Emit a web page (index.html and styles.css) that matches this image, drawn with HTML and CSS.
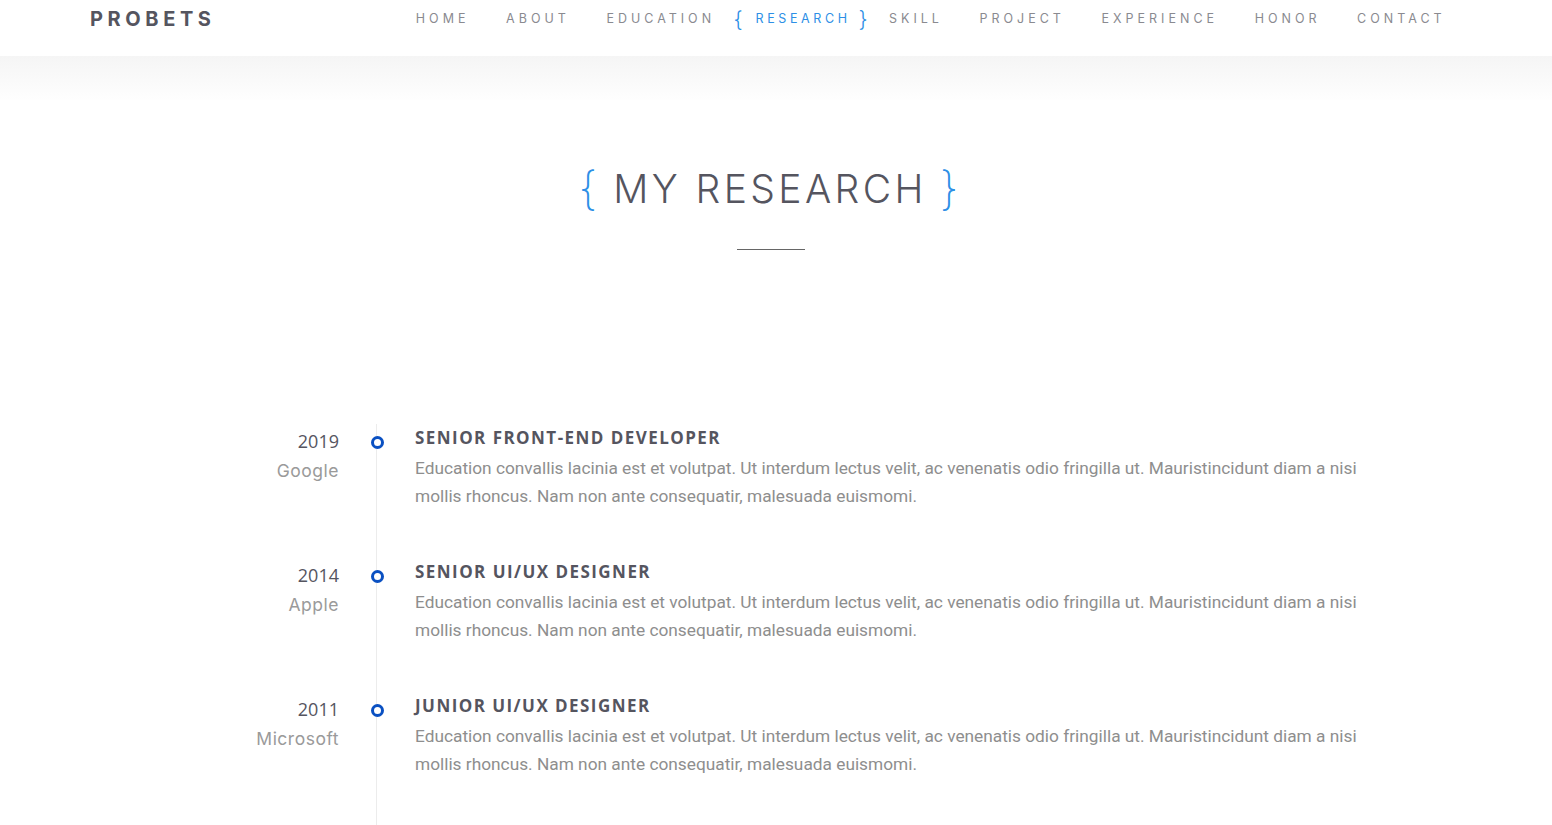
FILE: index.html
```html
<!DOCTYPE html>
<html lang="en">
<head>
<meta charset="utf-8">
<title>Probets - Research</title>
<link rel="stylesheet" href="styles.css">
</head>
<body>
<header class="site-header">
  <div class="header-inner">
    <div class="logo">PROBETS</div>
    <nav class="nav">
      <a class="nav-link" href="#">HOME</a>
      <a class="nav-link" href="#">ABOUT</a>
      <a class="nav-link" href="#">EDUCATION</a>
      <a class="nav-link active" href="#"><span class="brace">{</span><span class="nav-text">RESEARCH</span><span class="brace">}</span></a>
      <a class="nav-link" href="#">SKILL</a>
      <a class="nav-link" href="#">PROJECT</a>
      <a class="nav-link" href="#">EXPERIENCE</a>
      <a class="nav-link" href="#">HONOR</a>
      <a class="nav-link" href="#">CONTACT</a>
    </nav>
  </div>
</header>
<div class="header-shade"></div>

<main class="research">
  <div class="section-title">
    <h2 class="title"><span class="title-brace">{</span><span class="title-text">MY RESEARCH</span><span class="title-brace">}</span></h2>
    <div class="title-rule"></div>
  </div>

  <div class="timeline">
    <div class="item">
      <div class="item-meta">
        <div class="year">2019</div>
        <div class="company">Google</div>
      </div>
      <div class="item-axis"><span class="dot"></span></div>
      <div class="item-body">
        <h3 class="item-title">SENIOR FRONT-END DEVELOPER</h3>
        <p class="item-text">Education convallis lacinia est et volutpat. Ut interdum lectus velit, ac venenatis odio fringilla ut. Mauristincidunt diam a nisi mollis rhoncus. Nam non ante consequatir, malesuada euismomi.</p>
      </div>
    </div>
    <div class="item">
      <div class="item-meta">
        <div class="year">2014</div>
        <div class="company">Apple</div>
      </div>
      <div class="item-axis"><span class="dot"></span></div>
      <div class="item-body">
        <h3 class="item-title">SENIOR UI/UX DESIGNER</h3>
        <p class="item-text">Education convallis lacinia est et volutpat. Ut interdum lectus velit, ac venenatis odio fringilla ut. Mauristincidunt diam a nisi mollis rhoncus. Nam non ante consequatir, malesuada euismomi.</p>
      </div>
    </div>
    <div class="item">
      <div class="item-meta">
        <div class="year">2011</div>
        <div class="company">Microsoft</div>
      </div>
      <div class="item-axis"><span class="dot"></span></div>
      <div class="item-body">
        <h3 class="item-title">JUNIOR UI/UX DESIGNER</h3>
        <p class="item-text">Education convallis lacinia est et volutpat. Ut interdum lectus velit, ac venenatis odio fringilla ut. Mauristincidunt diam a nisi mollis rhoncus. Nam non ante consequatir, malesuada euismomi.</p>
      </div>
    </div>
  </div>
</main>
</body>
</html>
```

FILE: styles.css
```css
* { box-sizing: border-box; }
html, body { margin: 0; padding: 0; }
body {
  background: #fff;
  font-family: "Inter", "Open Sans", sans-serif;
  color: #55555f;
  overflow: hidden;
}

.site-header {
  height: 56px;
  background: #fff;
}
.header-inner {
  height: 37px;
  display: flex;
  align-items: center;
  padding-left: 90px;
}
.logo {
  font-family: "Inter", sans-serif;
  font-weight: 700;
  font-size: 20px;
  letter-spacing: 4.6px;
  color: #55555f;
}
.nav {
  display: flex;
  align-items: center;
  margin-left: 182px;
}
.nav-link {
  font-family: "Inter", sans-serif;
  font-size: 12.5px;
  letter-spacing: 4px;
  color: #8a8a90;
  text-decoration: none;
  padding: 0 18.3px;
  display: flex;
  align-items: center;
}
.nav-link.active {
  color: #2d8fe6;
  padding: 0 3px 0 0;
}
.nav-link.active .brace {
  font-size: 22px;
  letter-spacing: 0;
  font-weight: 300;
  line-height: 1;
}
.nav-link.active .nav-text {
  letter-spacing: 3.6px;
  padding: 0 8px 0 13px;
}

.header-shade {
  height: 44px;
  background: linear-gradient(#f5f5f5, #fefefe);
}

.section-title {
  display: flex;
  flex-direction: column;
  align-items: center;
  padding-top: 65px;
}
.title {
  margin: 0 0 0 -15px;
  display: flex;
  align-items: center;
  font-weight: 300;
  font-size: 39px;
  letter-spacing: 3.4px;
  color: #55555f;
  line-height: 1;
}
.title-brace {
  color: #2d8fe6;
  font-size: 46px;
  letter-spacing: 0;
  font-weight: 200;
}
.title-text { padding: 0 13px 0 16px; }
.title-rule {
  width: 68px;
  height: 1px;
  background: #666;
  margin-top: 38px;
  margin-left: -10px;
}

.timeline {
  width: 1180px;
  margin: 174px 0 0 191px;
}
.item {
  display: grid;
  grid-template-columns: 148px 76px 1fr;
}
.item-meta {
  text-align: right;
  padding-top: 3px;
}
.year {
  font-family: "Open Sans", sans-serif;
  font-size: 18px;
  line-height: 28px;
  color: #55555f;
}
.company {
  font-family: "Inter", sans-serif;
  font-size: 17.5px;
  letter-spacing: 0.5px;
  line-height: 32px;
  color: #9a9a9a;
}
.item-axis {
  background: linear-gradient(to right, transparent 37.5px, #ececec 37.5px, #ececec 38.5px, transparent 38.5px);
  display: flex;
  justify-content: center;
  padding-top: 12px;
  padding-left: 1px;
}
.dot {
  width: 13px;
  height: 13px;
  border: 3px solid #0a50c2;
  border-radius: 50%;
  background: #fff;
}
.item-body { padding-bottom: 48px; }
.item-title {
  margin: 0 0 2px;
  font-family: "Open Sans", sans-serif;
  font-weight: 700;
  font-size: 17px;
  letter-spacing: 1.45px;
  line-height: 28px;
  color: #55555f;
}
.item-text {
  margin: 0;
  font-family: "Roboto", sans-serif;
  font-size: 17.3px;
  line-height: 28px;
  color: #8e8e8e;
}
```
